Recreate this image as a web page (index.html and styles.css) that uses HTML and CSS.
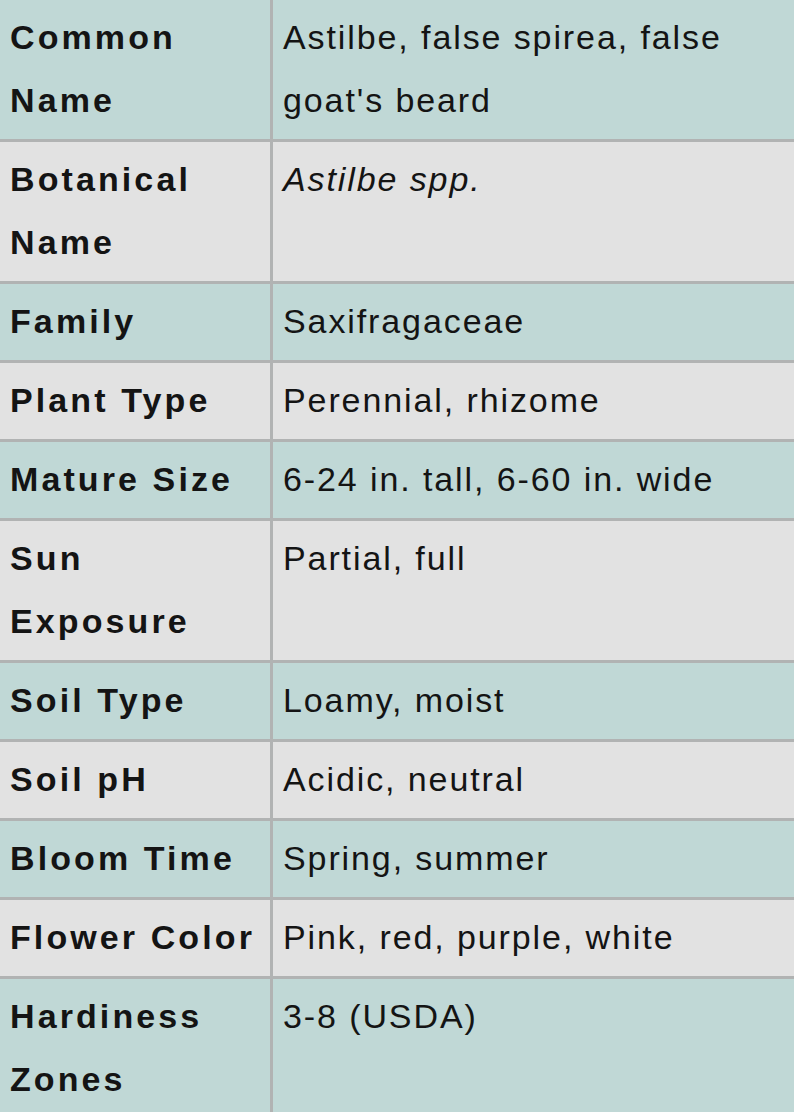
FILE: index.html
```html
<!DOCTYPE html>
<html>
<head>
<meta charset="utf-8">
<link rel="stylesheet" href="styles.css">
</head>
<body>
<table class="facts">
  <tr class="teal"><th>Common Name</th><td>Astilbe, false spirea, false goat's beard</td></tr>
  <tr class="grey"><th>Botanical Name</th><td><em>Astilbe spp.</em></td></tr>
  <tr class="teal"><th>Family</th><td>Saxifragaceae</td></tr>
  <tr class="grey"><th>Plant Type</th><td>Perennial, rhizome</td></tr>
  <tr class="teal"><th>Mature Size</th><td>6-24 in. tall, 6-60 in. wide</td></tr>
  <tr class="grey"><th>Sun Exposure</th><td>Partial, full</td></tr>
  <tr class="teal"><th>Soil Type</th><td>Loamy, moist</td></tr>
  <tr class="grey"><th>Soil pH</th><td>Acidic, neutral</td></tr>
  <tr class="teal"><th>Bloom Time</th><td>Spring, summer</td></tr>
  <tr class="grey"><th>Flower Color</th><td>Pink, red, purple, white</td></tr>
  <tr class="teal"><th>Hardiness Zones</th><td>3-8 (USDA)</td></tr>
</table>
</body>
</html>
```
FILE: styles.css
```css
html, body {
  margin: 0;
  padding: 0;
  background: #c0d8d6;
}
.facts {
  width: 794px;
  border-collapse: collapse;
  table-layout: fixed;
  font-family: "Liberation Sans", Arial, sans-serif;
  color: #141414;
  font-size: 34px;
  line-height: 63px;
}
.facts th, .facts td {
  border: 3px solid #b1b3b3;
  padding: 6px 10px 7px 10px;
  vertical-align: top;
  text-align: left;
}
.facts tr:first-child th, .facts tr:first-child td { border-top: none; }
.facts tr:last-child th, .facts tr:last-child td { border-bottom: none; }
.facts th { border-left: none; width: 250px; font-weight: bold; letter-spacing: 3.1px; }
.facts td { border-right: none; font-weight: normal; letter-spacing: 1.9px; padding-left: 10px; }
.facts em { font-style: italic; }
.teal { background: #c0d8d6; }
.grey { background: #e2e2e2; }
```
